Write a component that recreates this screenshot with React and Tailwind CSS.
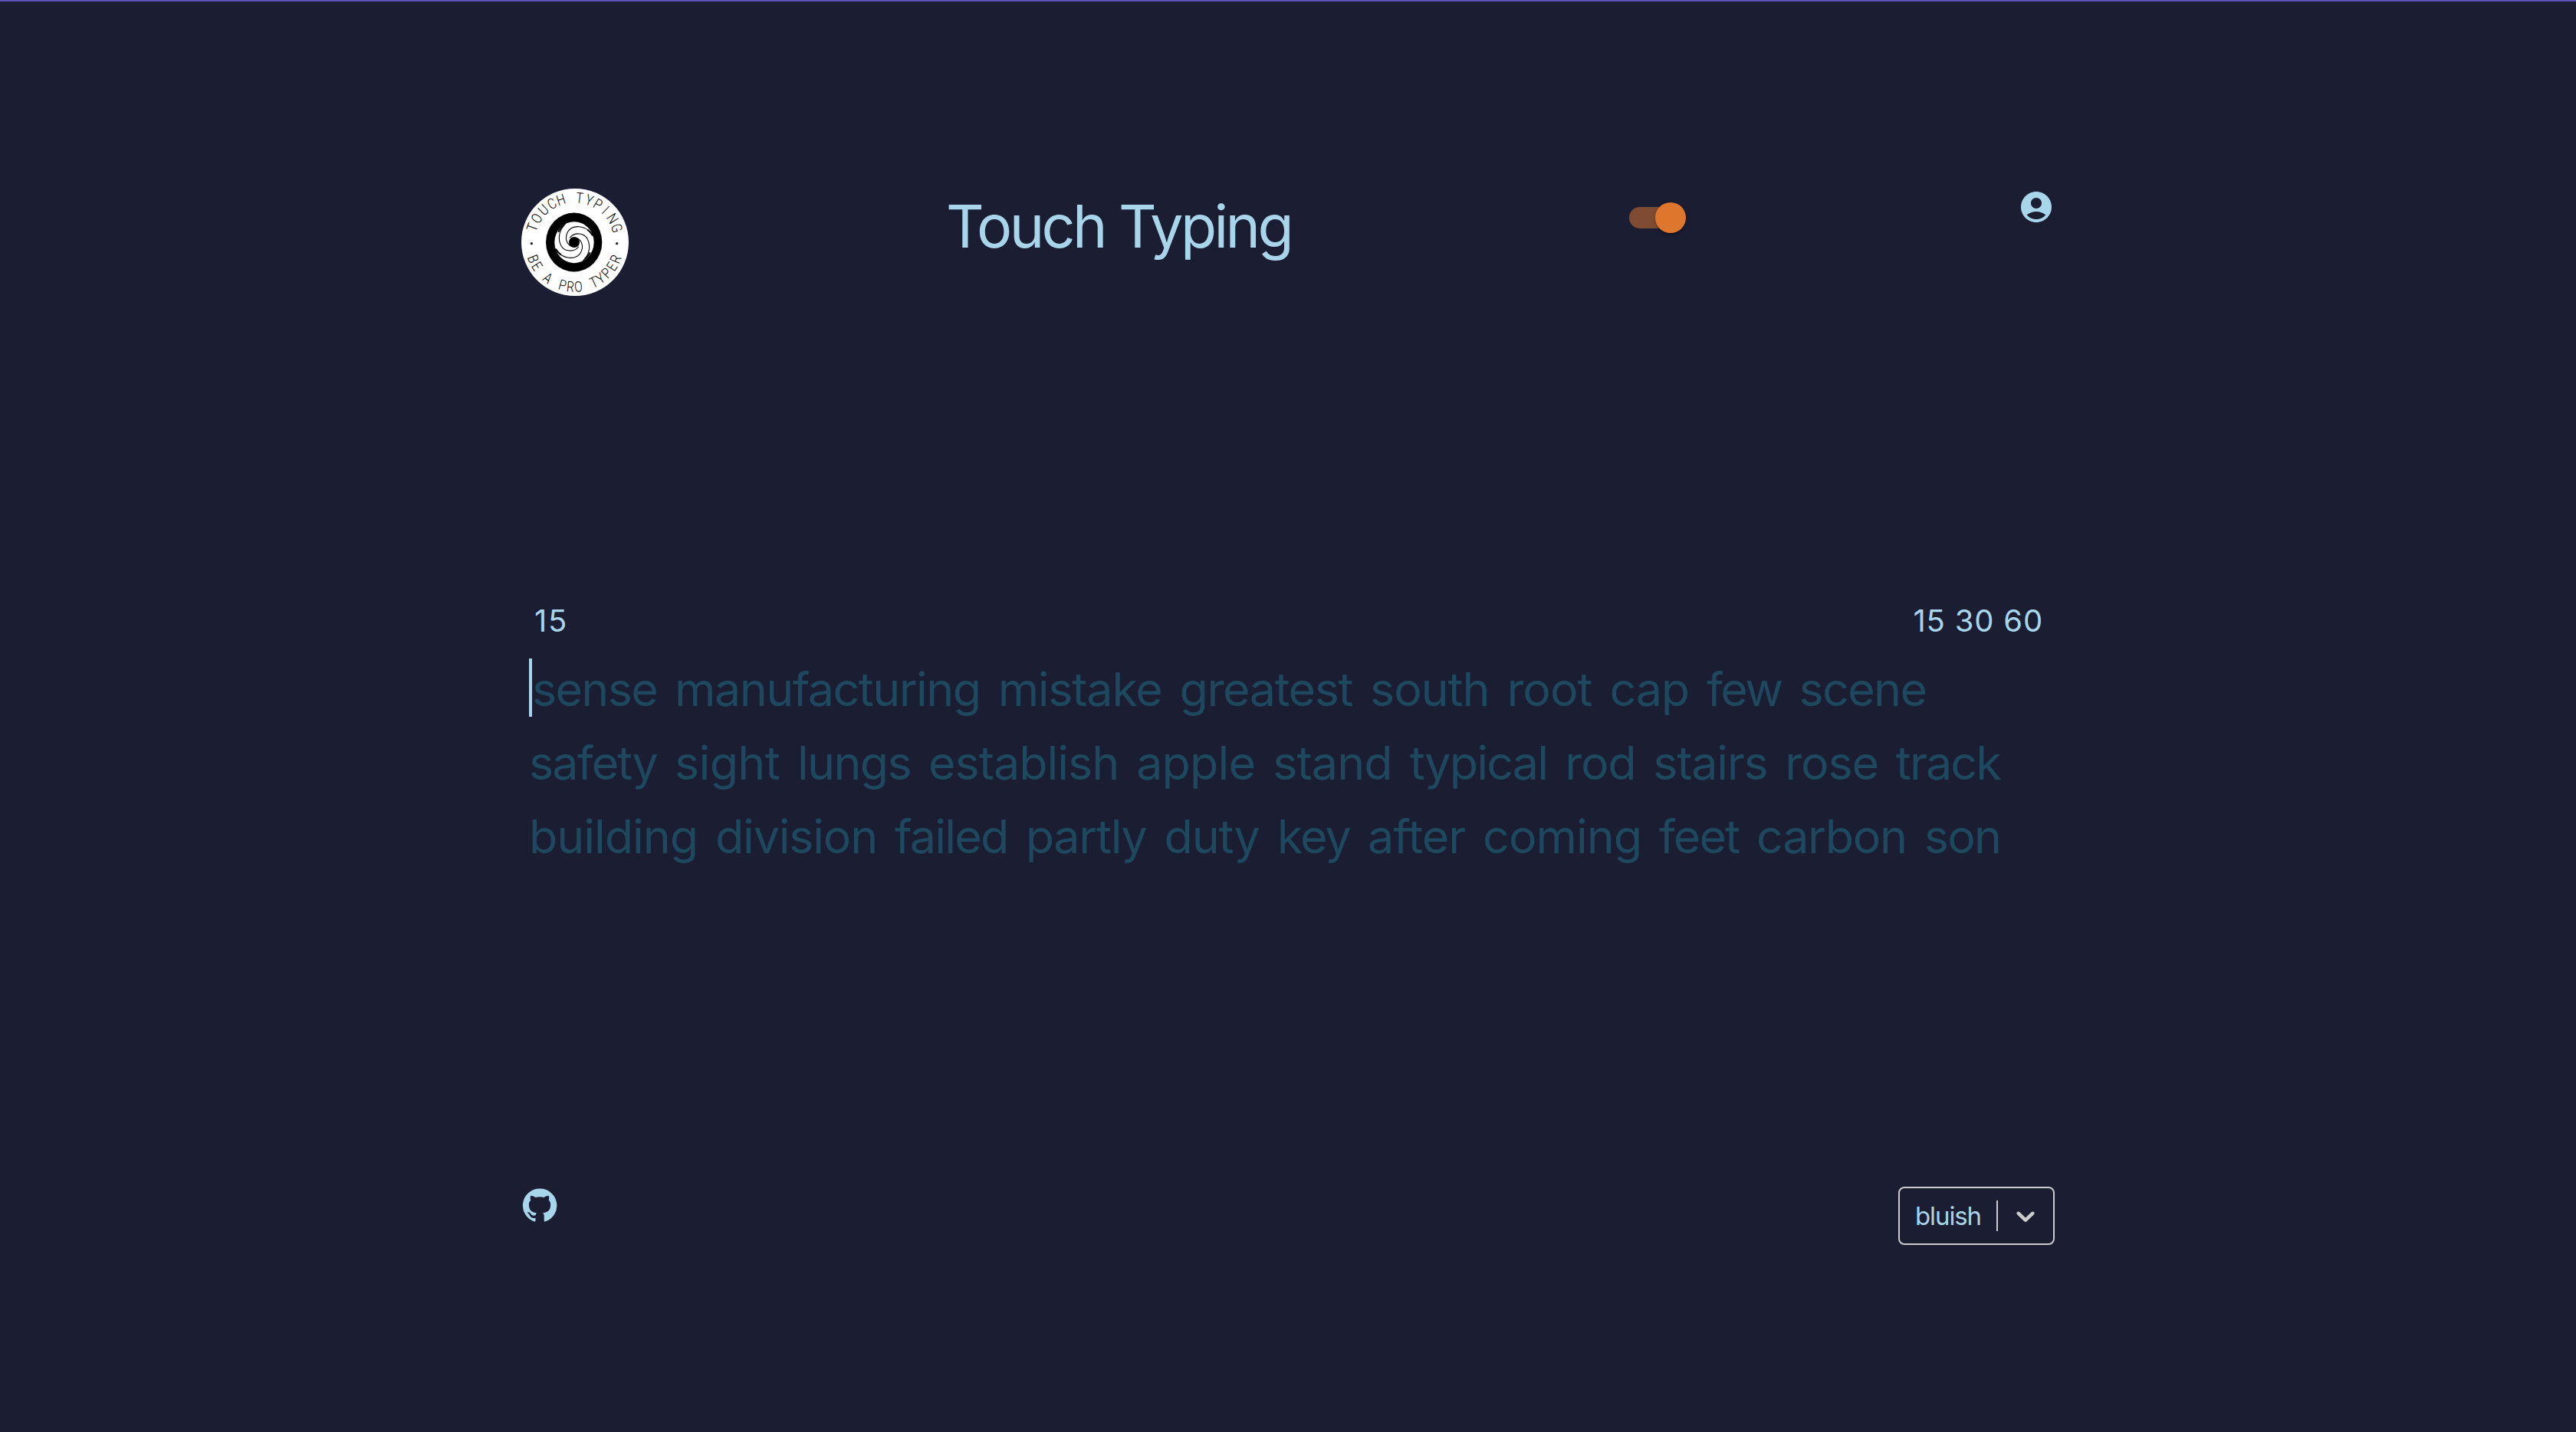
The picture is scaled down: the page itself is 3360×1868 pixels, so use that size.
const TOP_LETTERS = [
  ["T", -70.4], ["O", -57.6], ["U", -43.8], ["C", -30.4], ["H", -17.8],
  ["T", 6.5], ["Y", 19.3], ["P", 31.5], ["I", 44], ["N", 58], ["G", 71.5],
];

const BOTTOM_LETTERS = [
  ["B", 68], ["E", 57.4], ["A", 36.6], ["P", 15.7], ["R", 5.3], ["O", -5],
  ["T", -25.7], ["Y", -35.6], ["P", -46], ["E", -57], ["R", -67.8],
];

const LINES = [
  [
    ["sense", "tracking-[-1.7px]"],
    ["manufacturing", "tracking-[-1.55px]"],
    ["mistake", "tracking-[-1.23px]"],
    ["greatest", "tracking-[-1.43px]"],
    ["south", "tracking-[-1.1px]"],
    ["root", "tracking-[-1px]"],
    ["cap", "tracking-[-1.2px]"],
    ["few", "tracking-[-2.5px]"],
    ["scene", "tracking-[-1.7px]"],
  ],
  [
    ["safety", "tracking-[-1.87px]"],
    ["sight", "tracking-[-0.68px]"],
    ["lungs", "tracking-[-1.7px]"],
    ["establish", "tracking-[-1.03px]"],
    ["apple", "tracking-[-0.86px]"],
    ["stand", "tracking-[-0.9px]"],
    ["typical", "tracking-[-1.79px]"],
    ["rod", "tracking-[-1.3px]"],
    ["stairs", "tracking-[-1.27px]"],
    ["rose", "tracking-[-1.2px]"],
    ["track", "tracking-[-1.9px]"],
  ],
  [
    ["building", "tracking-[-1.07px]"],
    ["division", "tracking-[-1.22px]"],
    ["failed", "tracking-[-1.78px]"],
    ["partly", "tracking-[-1.27px]"],
    ["duty", "tracking-[-1.15px]"],
    ["key", "tracking-[-1.83px]"],
    ["after", "tracking-[-1.12px]"],
    ["coming", "tracking-[-1.02px]"],
    ["feet", "tracking-[-1.97px]"],
    ["carbon", "tracking-[-1.32px]"],
    ["son", "tracking-[-1.7px]"],
  ],
];

function Logo() {
  return (
    <svg viewBox="60 48 420 420" className="size-[140px] shrink-0">
      <circle cx="270" cy="258" r="210" fill="#fff" />
      <g fill="#000" className="font-['Roboto'] text-[57px] font-light" textAnchor="middle">
        {TOP_LETTERS.map(([c, a], i) => (
          <text key={i} transform={`translate(268 258) rotate(${a}) translate(0 -155) scale(.84 1)`}>{c}</text>
        ))}
        {BOTTOM_LETTERS.map(([c, a], i) => (
          <text key={i} transform={`translate(268 258) rotate(${a}) translate(0 194) scale(.82 1)`}>{c}</text>
        ))}
      </g>
      <circle cx="100" cy="263" r="5" fill="#222" />
      <circle cx="434" cy="263" r="5" fill="#222" />
      <g transform="translate(144 132)">
        <ellipse cx="122" cy="126" rx="110" ry="115.5" fill="#000" />
        <ellipse cx="123" cy="126.5" rx="77" ry="81" fill="#fff" />
        <circle cx="123" cy="126" r="21" fill="#000" />
        <g fill="none" stroke="#000" strokeLinecap="round">
          <g strokeWidth="3.2">
            <path d="M192 94C166 58 116 56 98 85C84 110 94 134 112 142" />
            <path d="M54 158C80 194 130 196 148 167C162 142 152 118 134 110" />
            <path d="M88 54C62 80 58 115 72 140C86 164 122 166 140 144" />
            <path d="M158 198C184 172 188 137 174 112C160 88 124 86 106 108" />
          </g>
          <g strokeWidth="6">
            <path d="M80 62C72 68 66 76 62 84" />
            <path d="M166 190C174 184 180 176 184 168" />
            <path d="M176 78C182 82 188 88 194 98" />
            <path d="M70 174C64 170 58 164 52 154" />
          </g>
        </g>
      </g>
    </svg>
  );
}

function Switch() {
  return (
    <div className="relative mt-[24px] ml-[445px] h-7 w-[68px] rounded-full bg-[#7f4c33]">
      <span className="absolute -top-1.5 left-[34px] size-10 rounded-full bg-[#de762e] shadow-[0_4px_2px_-2px_rgba(0,0,0,0.2),0_2px_2px_0_rgba(0,0,0,0.14),0_2px_6px_0_rgba(0,0,0,0.12)]" />
    </div>
  );
}

function Header() {
  return (
    <header className="flex h-[140px] items-start">
      <Logo />
      <h1 className="mt-px ml-[414px] w-[446px] whitespace-nowrap text-[77px] leading-[96px] tracking-[-3.6px]">
        Touch Typing
      </h1>
      <Switch />
      <svg viewBox="0 0 24 24" fill="currentColor" className="ml-auto size-12">
        <path d="M12 2C6.48 2 2 6.48 2 12s4.48 10 10 10 10-4.48 10-10S17.52 2 12 2zm0 4c1.93 0 3.5 1.57 3.5 3.5S13.93 13 12 13s-3.5-1.57-3.5-3.5S10.07 6 12 6zm0 14c-2.03 0-4.43-.82-6.14-2.88C7.55 15.8 9.68 15 12 15s4.45.8 6.14 2.12C16.43 19.18 14.03 20 12 20z" />
      </svg>
    </header>
  );
}

function TypeBox() {
  return (
    <main className="mt-[400px] px-2.5">
      <div className="flex justify-between pr-[5px] pl-[7px] text-[40px] leading-[48px] tracking-[0.8px]">
        <span className="tracking-[1.8px]">15</span>
        <span>15 30 60</span>
      </div>
      <div className="mt-[17px] text-[61px] leading-[96px] text-[#1e485d]">
        {LINES.map((line, i) => (
          <div key={i} className="flex h-24 items-start gap-[23px] whitespace-nowrap">
            {line.map(([word, tracking], j) =>
              i === 0 && j === 0 ? (
                <span key={word} className="flex">
                  <i className="mt-2 h-[76px] w-1 bg-[#a8d5e9]" />
                  <span className={tracking}>{word}</span>
                </span>
              ) : (
                <span key={word} className={tracking}>{word}</span>
              )
            )}
          </div>
        ))}
      </div>
    </main>
  );
}

function Footer() {
  return (
    <footer className="mt-[409px] flex items-start justify-between">
      <svg viewBox="0 0 24 24" fill="currentColor" className="size-12">
        <path d="M12 1.27a11 11 0 00-3.48 21.46c.55.09.73-.28.73-.55v-1.84c-3.03.64-3.67-1.46-3.67-1.46-.55-1.29-1.28-1.65-1.28-1.65-.92-.65.1-.65.1-.65 1.1 0 1.73 1.1 1.73 1.1.92 1.65 2.57 1.2 3.21.92a2 2 0 01.64-1.47c-2.47-.27-5.04-1.19-5.04-5.5 0-1.1.46-2.1 1.2-2.84a3.76 3.76 0 010-2.93s.91-.28 3.11 1.1c1.8-.49 3.7-.49 5.5 0 2.1-1.38 3.02-1.1 3.02-1.1a3.76 3.76 0 01.1 2.93c.83.74 1.2 1.74 1.2 2.94 0 4.21-2.57 5.13-5.04 5.4.45.37.82.92.82 2.02v3.03c0 .27.1.64.73.55A11 11 0 0012 1.27" />
      </svg>
      <div className="flex h-[76px] w-[204px] items-center rounded-lg border-2 border-[#ccc] pl-5 text-[#ccc]">
        <span className="w-[106px] text-[33px] leading-10 tracking-[-1.1px] text-[#a8d5e9]">bluish</span>
        <span className="h-10 w-0.5 bg-[#ccc]" />
        <svg viewBox="0 0 20 20" fill="currentColor" className="ml-4 size-10">
          <path d="M4.516 7.548c0.436-0.446 1.043-0.481 1.576 0l3.908 3.747 3.908-3.747c0.533-0.481 1.141-0.446 1.574 0 0.436 0.445 0.408 1.197 0 1.615-0.406 0.418-4.695 4.502-4.695 4.502-0.217 0.223-0.502 0.335-0.787 0.335s-0.57-0.112-0.789-0.335c0 0-4.287-4.084-4.695-4.502s-0.436-1.17 0-1.615z" />
        </svg>
      </div>
    </footer>
  );
}

export default function App() {
  return (
    <div className="min-h-screen overflow-hidden border-t-2 border-[#5f52b6] bg-[#1b1d33] font-['Inter','Liberation_Sans',sans-serif] text-[#a8d5e9]">
      <div className="mx-auto w-[2000px] pt-[244px]">
        <Header />
        <TypeBox />
        <Footer />
      </div>
    </div>
  );
}
